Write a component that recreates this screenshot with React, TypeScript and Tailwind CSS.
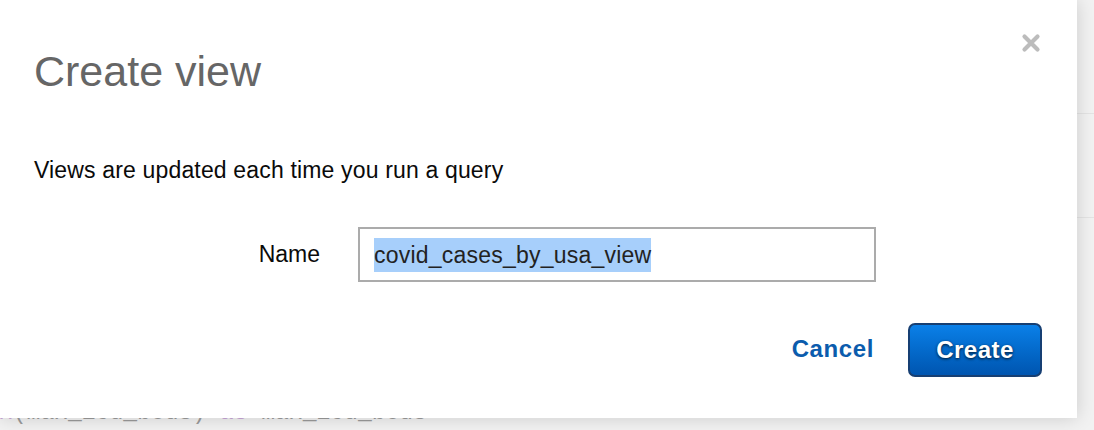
function CloseIcon() {
  return (
    <svg width="20" height="20" viewBox="0 0 20 20" aria-hidden="true">
      <path d="M3.5 3.5 L16.5 16.5 M16.5 3.5 L3.5 16.5" stroke="#bcbcbc" strokeWidth="4.2" strokeLinecap="round" />
    </svg>
  );
}

export default function App() {
  return (
    <div className="relative h-[430px] w-[1094px] overflow-hidden bg-[#f2f2f2] font-['Liberation_Sans',Arial,sans-serif]">
      {/* page underneath the dialog */}
      <div className="flex flex-col">
        <div className="h-[114px] border-b border-[#e4e4e4]" />
        <div className="h-[104px] border-b border-[#e4e4e4]" />
        <div className="mt-[184px] -ml-px whitespace-pre font-['Liberation_Mono',monospace] text-[23px] leading-[23px] text-[#9b9b9b]">
          <span className="text-[#c9a6d8]">x</span>(max_icu_beds) <span className="text-[#c9a6d8]">as</span> max_icu_beds
        </div>
      </div>

      {/* dialog */}
      <div className="absolute left-0 top-0 flex h-[418px] w-[1077px] flex-col bg-white px-[34px] shadow-[0_0_18px_rgba(0,0,0,0.16)]">
        <button className="absolute right-[36px] top-[33px]" aria-label="Close">
          <CloseIcon />
        </button>

        <h2 className="pt-[50px] text-[43px] leading-[43px] text-[#666666]">Create view</h2>

        <p className="mt-[66px] text-[23px] leading-[23px] tracking-[0.16px] text-[#0a0a0a]">
          Views are updated each time you run a query
        </p>

        <div className="mt-[45px] flex items-center gap-[38px]">
          <label className="w-[286px] text-right text-[23px] leading-[23px] text-[#0a0a0a]">Name</label>
          <div className="flex h-[55px] w-[518px] items-center border-2 border-[#ababab] pl-[14px]">
            <span className="bg-[#a7cffb] text-[23px] leading-[34px] tracking-[0.22px] text-[#222222]">covid_cases_by_usa_view</span>
          </div>
        </div>

        <div className="mt-[41px] flex items-center justify-end gap-[34px] pr-px">
          <button className="-mt-[3px] text-[24px] font-bold leading-[24px] tracking-[0.6px] text-[#0b5cad]">Cancel</button>
          <button className="flex h-[54px] w-[134px] items-center justify-center rounded-[7px] border-2 border-[#173f73] bg-gradient-to-b from-[#0b80e8] to-[#0055b0] text-[24px] font-bold tracking-[0.5px] text-white [text-shadow:0_1px_3px_rgba(0,0,0,0.8)]">
            Create
          </button>
        </div>
      </div>
    </div>
  );
}
